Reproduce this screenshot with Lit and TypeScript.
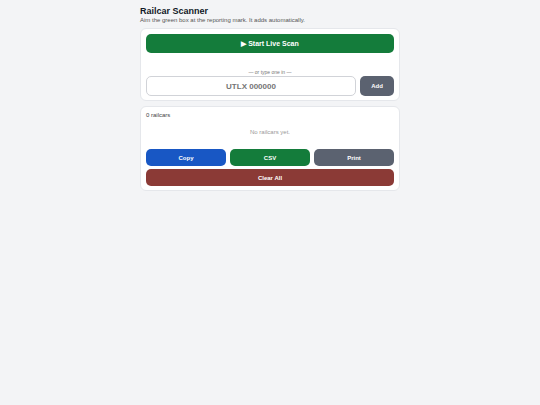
import { LitElement, html, css } from "lit";
import { customElement, state } from "lit/decorators.js";

@customElement("app-root")
export class AppRoot extends LitElement {
  @state() private cars: string[] = [];

  static styles = css`
    :host {
      display: block;
      box-sizing: border-box;
      min-height: 100vh;
      padding: 7px 5px;
      background: #f3f4f6;
      color: #111827;
      font-family: "Liberation Sans", Arial, sans-serif;
      font-size: 6px;
      line-height: 8px;
    }
    * {
      box-sizing: border-box;
    }
    main {
      max-width: 260px;
      margin: 0 auto;
    }
    h1 {
      margin: 0;
      font-size: 9px;
      line-height: 9px;
    }
    p {
      margin: 0;
    }
    .subtitle {
      color: #555;
      margin-bottom: 4px;
    }
    .card {
      padding: 5px 5px 4px;
      margin-bottom: 5px;
      background: #fff;
      border: 1px solid #e5e7eb;
      border-radius: 6px;
    }
    button {
      height: 17px;
      padding: 0 4px;
      border: 0;
      border-radius: 5px;
      background: #5b6270;
      color: #fff;
      font: bold 6px "Liberation Sans", Arial, sans-serif;
    }
    .green {
      background: #147c3b;
    }
    .blue {
      background: #1857c4;
    }
    .red {
      background: #8b3a36;
    }
    .wide {
      display: block;
      width: 100%;
    }
    .scan {
      height: 19px;
      font-size: 7px;
    }
    .hint {
      margin-top: 15px;
      color: #777;
      font-size: 5px;
      text-align: center;
    }
    .entry {
      display: flex;
      gap: 4px;
    }
    .entry input {
      flex: 1;
      min-width: 0;
      height: 20px;
      border: 1px solid #d1d3d8;
      border-radius: 5px;
      background: #fff;
      color: #111827;
      font: bold 8px "Liberation Sans", Arial, sans-serif;
      text-align: center;
      text-transform: uppercase;
    }
    .entry input::placeholder {
      color: #757575;
    }
    .entry button {
      width: 34px;
      height: 20px;
    }
    .count {
      color: #444;
      line-height: 6px;
    }
    .empty {
      padding: 10px 0 13px;
      color: #999;
      text-align: center;
    }
    .list {
      margin: 0;
      padding: 4px 0;
      list-style: none;
    }
    .actions {
      display: grid;
      grid-template-columns: repeat(3, 1fr);
      gap: 4px;
      margin-bottom: 3px;
    }
  `;

  private add(e: Event) {
    e.preventDefault();
    const input = this.renderRoot.querySelector("input")!;
    const mark = input.value.trim().toUpperCase();
    if (mark) this.cars = [...this.cars, mark];
    input.value = "";
  }

  render() {
    return html`
      <main>
        <h1>Railcar Scanner</h1>
        <p class="subtitle">Aim the green box at the reporting mark. It adds automatically.</p>
        <section class="card">
          <button class="wide scan green">▶ Start Live Scan</button>
          <p class="hint">— or type one in —</p>
          <form class="entry" @submit=${this.add}>
            <input type="text" aria-label="Reporting mark" placeholder="UTLX 000000" />
            <button type="submit">Add</button>
          </form>
        </section>
        <section class="card">
          <p class="count">${this.cars.length} railcars</p>
          ${this.cars.length
            ? html`<ul class="list">${this.cars.map((c) => html`<li>${c}</li>`)}</ul>`
            : html`<p class="empty">No railcars yet.</p>`}
          <div class="actions">
            <button class="blue">Copy</button>
            <button class="green">CSV</button>
            <button>Print</button>
          </div>
          <button class="wide red" @click=${() => (this.cars = [])}>Clear All</button>
        </section>
      </main>
    `;
  }
}
